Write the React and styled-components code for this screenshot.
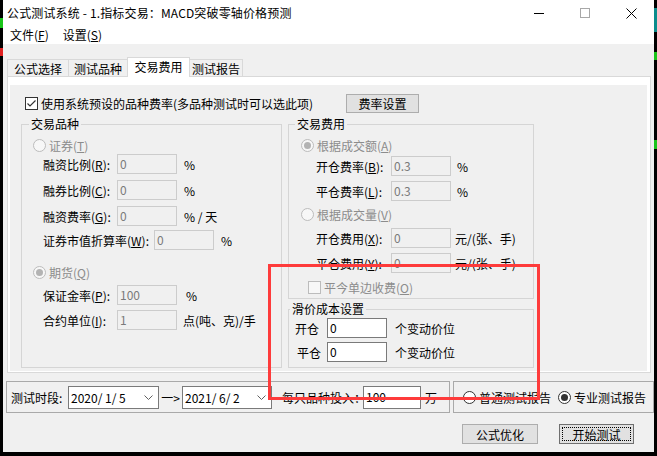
import React from 'react';
import styled, { createGlobalStyle } from 'styled-components';

const GlobalStyle = createGlobalStyle`
  html, body { margin: 0; padding: 0; background: #000; }
  body {
    font-family: "Noto Sans CJK SC", "Noto Sans", sans-serif;
    font-size: 12px;
    color: #000;
  }
  * { box-sizing: border-box; }
  u { text-decoration: underline; text-underline-offset: 1px; }
`;

const Screen = styled.div`
  position: relative;
  width: 657px;
  height: 456px;
  background: #000;
  overflow: hidden;
  display: flex;
  align-items: flex-start;
  padding-left: 3px;
`;

const DesktopMark = styled.div`
  position: absolute;
  width: 3px;
  background: ${p => p.$c};
`;

const Window = styled.div`
  width: 651px;
  height: 452px;
  background: #f0f0f0;
  display: flex;
  flex-direction: column;
`;

const TitleBar = styled.div`
  height: 26px;
  background: #fff;
  display: flex;
  align-items: center;
`;

const TitleText = styled.div`
  flex: 1;
  padding-left: 4px;
  line-height: 26px;
  white-space: nowrap;
  letter-spacing: 0.15px;
`;

const CaptionButton = styled.div`
  width: 46px;
  height: 26px;
  display: flex;
  align-items: center;
  justify-content: center;
`;

const MenuBar = styled.div`
  height: 18px;
  background: #fff;
  display: flex;
  align-items: center;
`;

const MenuItem = styled.div`
  padding: 0 7px;
  line-height: 18px;
  white-space: nowrap;
`;

const Body = styled.div`
  display: flex;
  flex-direction: column;
  padding: 13px 0 0 4px;
`;

const TabStrip = styled.div`
  position: relative;
  z-index: 1;
  height: 20px;
  margin-bottom: -1px;
  display: flex;
  align-items: flex-end;
`;

const Tab = styled.div`
  width: ${p => p.$w}px;
  height: ${p => (p.$active ? 20 : 17)}px;
  margin-left: ${p => (p.$first ? 0 : -1)}px;
  margin-bottom: ${p => (p.$active ? 0 : 1)}px;
  border: 1px solid #d9d9d9;
  border-bottom: none;
  background: ${p => (p.$active ? '#fff' : '#f0f0f0')};
  position: relative;
  z-index: ${p => (p.$active ? 2 : 1)};
  display: flex;
  align-items: center;
  justify-content: center;
  padding-bottom: ${p => (p.$active ? 2 : 0)}px;
  white-space: nowrap;
`;

const Panel = styled.div`
  width: 644px;
  height: 297px;
  border: 1px solid #d9d9d9;
  background: #fff;
  padding: 8px 3px 1px 2px;
  display: flex;
`;

const PanelInner = styled.div`
  flex: 1;
  background: #f0f0f0;
  display: flex;
  flex-direction: column;
`;

const CheckRow = styled.div`
  margin-top: 9px;
  height: 19px;
  padding-left: 15px;
  display: flex;
  align-items: center;
`;

const CheckBox = styled.span`
  width: 13px;
  height: 13px;
  flex: none;
  border: 1px solid ${p => (p.$disabled ? '#bcbcbc' : '#333')};
  background: ${p => (p.$disabled ? '#f7f7f7' : '#fff')};
  display: inline-flex;
  align-items: center;
  justify-content: center;
`;

const CheckText = styled.span`
  margin-left: 3px;
  width: ${p => (p.$w ? `${p.$w}px` : 'auto')};
  flex: none;
  white-space: nowrap;
  color: ${p => (p.$disabled ? '#8c8c8c' : '#000')};
`;

const Button = styled.div`
  width: ${p => p.$w}px;
  height: ${p => p.$h}px;
  flex: none;
  background: #e1e1e1;
  border: 1px solid ${p => (p.$default ? '#6f6f6f' : '#adadad')};
  display: flex;
  align-items: center;
  justify-content: center;
  position: relative;
  white-space: nowrap;
  &::after {
    content: '';
    display: ${p => (p.$default ? 'block' : 'none')};
    position: absolute;
    inset: 2px;
    border: 1px dotted #000;
  }
`;

const GroupsRow = styled.div`
  margin-top: 11px;
  padding-left: 11px;
  display: flex;
  gap: 6px;
  align-items: flex-start;
`;

const Column = styled.div`
  width: ${p => p.$w}px;
  display: flex;
  flex-direction: column;
  gap: 10px;
`;

const GroupBox = styled.div`
  position: relative;
  width: ${p => p.$w}px;
  height: ${p => p.$h}px;
  flex: none;
  border: 1px solid ${p => p.$border || '#d5d5d5'};
  display: flex;
  flex-direction: ${p => (p.$row ? 'row' : 'column')};
  align-items: ${p => (p.$row ? 'center' : 'stretch')};
  padding-left: ${p => p.$pl || 0}px;
`;

const Legend = styled.span`
  position: absolute;
  top: -9px;
  left: ${p => p.$left}px;
  padding: 0 2px;
  background: #f0f0f0;
  line-height: 16px;
  white-space: nowrap;
`;

const Row = styled.div`
  margin-top: ${p => p.$mt}px;
  padding-left: ${p => p.$pl}px;
  height: ${p => p.$h || 20}px;
  display: flex;
  align-items: center;
  white-space: nowrap;
`;

const FieldLabel = styled.span`
  width: ${p => p.$w}px;
  flex: none;
  white-space: nowrap;
`;

const TextInput = styled.div`
  width: ${p => p.$w || 60}px;
  height: ${p => p.$h || 20}px;
  flex: none;
  border: 1px solid ${p => (p.$disabled ? '#cccccc' : '#7a7a7a')};
  background: ${p => (p.$disabled ? '#f0f0f0' : '#fff')};
  color: ${p => (p.$disabled ? '#7a7a7a' : '#000')};
  padding-left: 2px;
  display: flex;
  align-items: center;
  line-height: 1;
`;

const Unit = styled.span`
  margin-left: ${p => p.$gap}px;
  width: ${p => (p.$w ? `${p.$w}px` : 'auto')};
  flex: none;
  white-space: pre;
`;

const RadioDot = styled.span`
  width: 13px;
  height: 13px;
  flex: none;
  border-radius: 50%;
  border: 1px solid ${p => (p.$disabled ? '#bcbcbc' : '#333')};
  background: ${p => (p.$disabled ? '#f7f7f7' : '#fff')};
  display: inline-flex;
  align-items: center;
  justify-content: center;
  &::after {
    content: '';
    width: 7px;
    height: 7px;
    border-radius: 50%;
    background: ${p => (p.$checked ? (p.$disabled ? '#b3b3b3' : '#333') : 'transparent')};
  }
`;

const RadioText = styled.span`
  margin-left: 3px;
  width: ${p => (p.$w ? `${p.$w}px` : 'auto')};
  flex: none;
  color: ${p => (p.$disabled ? '#8c8c8c' : '#000')};
  white-space: nowrap;
`;

const BottomRow = styled.div`
  margin-top: 8px;
  margin-left: 3px;
  display: flex;
  gap: 3px;
`;

const Combo = styled.div`
  width: ${p => p.$w}px;
  height: 23px;
  flex: none;
  border: 1px solid #7a7a7a;
  background: #fff;
  display: flex;
  align-items: center;
  justify-content: space-between;
  padding: 0 5px 0 2px;
  white-space: pre;
`;

const Arrow = styled.span`
  width: 23px;
  flex: none;
  text-align: center;
`;

const ButtonsRow = styled.div`
  margin-top: 11px;
  display: flex;
  justify-content: flex-end;
  gap: 21px;
  padding-right: 20px;
`;

const Annotation = styled.div`
  position: absolute;
  left: 268px;
  top: 264px;
  width: 272px;
  height: 136px;
  border: 3px solid #fe3b3b;
  pointer-events: none;
`;

const Chevron = () => (
  <svg width="9" height="5" viewBox="0 0 9 5">
    <polyline points="0.5,0.5 4.5,4.5 8.5,0.5" fill="none" stroke="#606060" strokeWidth="1" />
  </svg>
);

const CheckMark = () => (
  <svg width="11" height="11" viewBox="0 0 11 11">
    <polyline points="1.5,5.5 4,8 9.5,2.5" fill="none" stroke="#333" strokeWidth="1.2" />
  </svg>
);

const Radio = ({ checked, disabled, children, w }) => (
  <>
    <RadioDot $checked={checked} $disabled={disabled} />
    <RadioText $disabled={disabled} $w={w}>{children}</RadioText>
  </>
);

const Field = ({ mt, pl, lw, label, value, unit, gap }) => (
  <Row $mt={mt} $pl={pl}>
    <FieldLabel $w={lw}>{label}</FieldLabel>
    <TextInput $disabled>{value}</TextInput>
    <Unit $gap={gap}>{unit}</Unit>
  </Row>
);

export default function App() {
  return (
    <>
      <GlobalStyle />
      <Screen>
        <DesktopMark $c="#0b8c8c" style={{ right: 0, top: 8, height: 24 }} />
        <DesktopMark $c="#19c419" style={{ right: 0, top: 52, height: 8 }} />
        <DesktopMark $c="#19c419" style={{ right: 0, top: 140, height: 9 }} />
        <DesktopMark $c="#19c419" style={{ left: 0, top: 18, height: 10 }} />
        <DesktopMark $c="#e02020" style={{ left: 0, top: 48, height: 8 }} />
        <Window>
          <TitleBar>
            <TitleText>公式测试系统 - 1.指标交易：MACD突破零轴价格预测</TitleText>
            <CaptionButton>
              <svg width="10" height="10" viewBox="0 0 10 10">
                <line x1="0" y1="5.5" x2="10" y2="5.5" stroke="#000" strokeWidth="1" />
              </svg>
            </CaptionButton>
            <CaptionButton>
              <svg width="10" height="10" viewBox="0 0 10 10">
                <rect x="0.5" y="0.5" width="9" height="9" fill="none" stroke="#a8a8a8" strokeWidth="1" />
              </svg>
            </CaptionButton>
            <CaptionButton>
              <svg width="11" height="11" viewBox="0 0 11 11">
                <line x1="0.5" y1="0.5" x2="10.5" y2="10.5" stroke="#000" strokeWidth="1" />
                <line x1="10.5" y1="0.5" x2="0.5" y2="10.5" stroke="#000" strokeWidth="1" />
              </svg>
            </CaptionButton>
          </TitleBar>
          <MenuBar>
            <MenuItem>文件(<u>F</u>)</MenuItem>
            <MenuItem>设置(<u>S</u>)</MenuItem>
          </MenuBar>
          <Body>
            <TabStrip>
              <Tab $w={62} $first>公式选择</Tab>
              <Tab $w={60}>测试品种</Tab>
              <Tab $w={63} $active>交易费用</Tab>
              <Tab $w={54}>测试报告</Tab>
            </TabStrip>
            <Panel>
              <PanelInner>
                <CheckRow>
                  <CheckBox><CheckMark /></CheckBox>
                  <CheckText $w={305}>使用系统预设的品种费率(多品种测试时可以选此项)</CheckText>
                  <Button $w={73} $h={19}>费率设置</Button>
                </CheckRow>
                <GroupsRow>
                  <GroupBox $w={261} $h={244}>
                    <Legend $left={7}>交易品种</Legend>
                    <Row $mt={11} $pl={11} $h={18}>
                      <Radio disabled>证券(<u>T</u>)</Radio>
                    </Row>
                    <Field mt={0} pl={21} lw={74} label={<>融资比例(<u>R</u>):</>} value="0" unit="%" gap={7} />
                    <Field mt={6} pl={21} lw={74} label={<>融券比例(<u>C</u>):</>} value="0" unit="%" gap={7} />
                    <Field mt={6} pl={21} lw={74} label={<>融资费率(<u>G</u>):</>} value="0" unit="% / 天" gap={7} />
                    <Field mt={4} pl={21} lw={111} label={<>证券市值折算率(<u>W</u>):</>} value="0" unit="%" gap={7} />
                    <Row $mt={13} $pl={11} $h={18}>
                      <Radio checked disabled>期货(<u>Q</u>)</Radio>
                    </Row>
                    <Field mt={4} pl={21} lw={74} label={<>保证金率(<u>P</u>):</>} value="100" unit="%" gap={9} />
                    <Field mt={5} pl={21} lw={74} label={<>合约单位(<u>I</u>):</>} value="1" unit="点(吨、克)/手" gap={6} />
                  </GroupBox>
                  <Column $w={246}>
                    <GroupBox $w={246} $h={175}>
                      <Legend $left={6}>交易费用</Legend>
                      <Row $mt={11} $pl={12} $h={18}>
                        <Radio checked disabled>根据成交额(<u>A</u>)</Radio>
                      </Row>
                      <Field mt={2} pl={27} lw={75} label={<>开仓费率(<u>B</u>):</>} value="0.3" unit="%" gap={6} />
                      <Field mt={5} pl={27} lw={75} label={<>平仓费率(<u>L</u>):</>} value="0.3" unit="%" gap={6} />
                      <Row $mt={4} $pl={12} $h={18}>
                        <Radio disabled>根据成交量(<u>V</u>)</Radio>
                      </Row>
                      <Field mt={5} pl={27} lw={75} label={<>开仓费用(<u>X</u>):</>} value="0" unit="元/(张、手)" gap={4} />
                      <Field mt={5} pl={27} lw={75} label={<>平仓费用(<u>Y</u>):</>} value="0" unit="元/(张、手)" gap={4} />
                      <Row $mt={5} $pl={19} $h={18}>
                        <CheckBox $disabled />
                        <CheckText $disabled>平今单边收费(<u>O</u>)</CheckText>
                      </Row>
                    </GroupBox>
                    <GroupBox $w={246} $h={59}>
                      <Legend $left={1}>滑价成本设置</Legend>
                      <Row $mt={8} $pl={6}>
                        <FieldLabel $w={32}>开仓</FieldLabel>
                        <TextInput>0</TextInput>
                        <Unit $gap={8}>个变动价位</Unit>
                      </Row>
                      <Row $mt={4} $pl={8}>
                        <FieldLabel $w={30}>平仓</FieldLabel>
                        <TextInput>0</TextInput>
                        <Unit $gap={8}>个变动价位</Unit>
                      </Row>
                    </GroupBox>
                  </Column>
                </GroupsRow>
              </PanelInner>
            </Panel>
          </Body>
          <BottomRow>
            <GroupBox $w={444} $h={32} $row $pl={4} $border="#a9a9a9">
              <FieldLabel $w={57}>测试时段:</FieldLabel>
              <Combo $w={91}>2020/ 1/ 5<Chevron /></Combo>
              <Arrow>一&gt;</Arrow>
              <Combo $w={90}>2021/ 6/ 2<Chevron /></Combo>
              <Unit $gap={10} $w={81}>每只品种投入：</Unit>
              <TextInput $w={58} $h={23}>100</TextInput>
              <Unit $gap={4}>万</Unit>
            </GroupBox>
            <GroupBox $w={201} $h={32} $row $pl={9} $border="#a9a9a9">
              <Radio w={79}>普通测试报告</Radio>
              <Radio checked>专业测试报告</Radio>
            </GroupBox>
          </BottomRow>
          <ButtonsRow>
            <Button $w={76} $h={20}>公式优化</Button>
            <Button $w={75} $h={20} $default>开始测试</Button>
          </ButtonsRow>
        </Window>
        <Annotation />
      </Screen>
    </>
  );
}
